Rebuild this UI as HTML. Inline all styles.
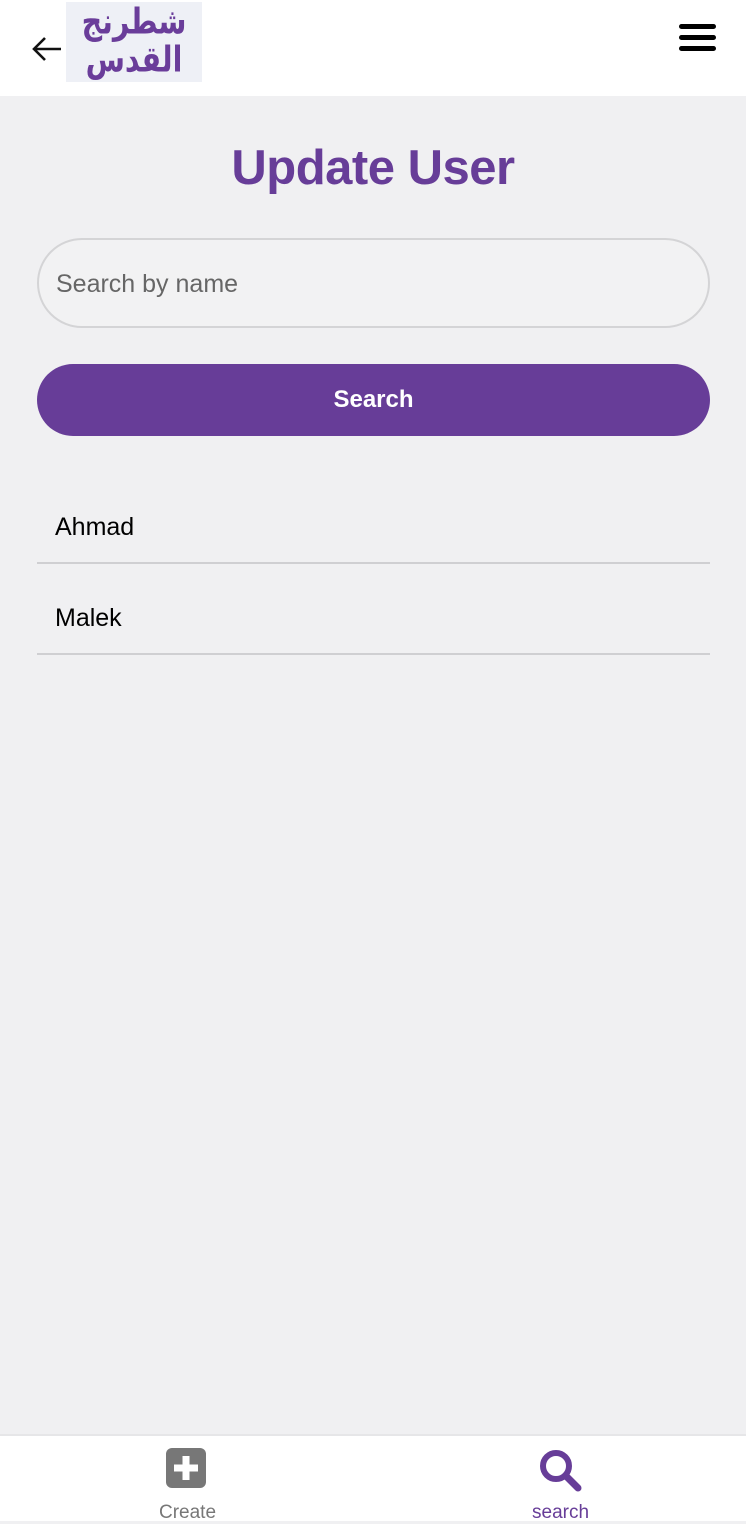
<!DOCTYPE html>
<html><head><meta charset="utf-8"><style>
*{margin:0;padding:0;box-sizing:border-box}
body{width:746px;height:1521px;background:#f0f0f2;font-family:"Liberation Sans",Roboto,sans-serif;position:relative;overflow:hidden}
.hdr{position:absolute;left:0;top:0;width:746px;height:96px;background:#fff}
.logo{position:absolute;left:66px;top:2px;width:136px;height:80px;background:#eef0f6;overflow:hidden}
.logo div{position:absolute;left:0;width:136px;text-align:center;color:#6a3d9a;font-family:"DejaVu Sans",sans-serif;font-weight:bold;font-size:31px;line-height:40px;transform:scale(0.92,1.15)}
h1{position:absolute;top:140px;left:0;width:746px;text-align:center;color:#673d98;font-size:49px;font-weight:bold;letter-spacing:-0.5px}
.inp{position:absolute;left:37px;top:238px;width:673px;height:90px;border:2px solid #d4d4d6;border-radius:45px;background:#f2f2f3;font-size:25px;color:#666;padding-left:17px;line-height:88px}
.btn{position:absolute;left:37px;top:364px;width:673px;height:72px;border-radius:36px;background:#673d98;color:#fff;text-align:center;line-height:72px;font-size:24px;font-weight:bold}
.item{position:absolute;left:37px;width:673px;height:91px;border-bottom:2px solid #cfcfd2;font-size:25px;color:#000;padding-left:18px}
.nav{position:absolute;left:0;top:1434px;width:746px;height:87px;background:#fff;border-top:2px solid #e6e6e8}
.lbl{position:absolute;top:66px;font-size:19px;color:#777}
</style></head><body>
<div class="hdr">
<svg style="position:absolute;left:30px;top:34px" width="34" height="30" viewBox="0 0 34 30"><path d="M31 15H4M15 4L4 15l11 11" fill="none" stroke="#111" stroke-width="2.6"/></svg>
<div class="logo"><div style="top:0">شطرنج</div><div style="top:38px">القدس</div></div>
<div style="position:absolute;left:679px;top:24px;width:37px;height:5px;background:#000;border-radius:3px"></div>
<div style="position:absolute;left:679px;top:35px;width:37px;height:5px;background:#000;border-radius:3px"></div>
<div style="position:absolute;left:679px;top:46px;width:37px;height:5px;background:#000;border-radius:3px"></div>
</div>
<h1>Update User</h1>
<div class="inp">Search by name</div>
<div class="btn">Search</div>
<div class="item" style="top:473px;line-height:108px">Ahmad</div>
<div class="item" style="top:564px;line-height:108px">Malek</div>
<div class="nav">
<svg style="position:absolute;left:166px;top:12px" width="40" height="40" viewBox="0 0 40 40"><rect x="0" y="0" width="40" height="40" rx="6" fill="#777"/><path d="M20 8v24M8 20h24" stroke="#fff" stroke-width="7"/></svg>
<div class="lbl" style="left:159px">Create</div>
<svg style="position:absolute;left:538px;top:12px" width="46" height="46" viewBox="0 0 46 46"><circle cx="18" cy="18" r="13" fill="none" stroke="#673d98" stroke-width="6"/><path d="M28 28l12 12" stroke="#673d98" stroke-width="7" stroke-linecap="round"/></svg>
<div class="lbl" style="left:532px;color:#673d98">search</div>
</div>
</body></html>
